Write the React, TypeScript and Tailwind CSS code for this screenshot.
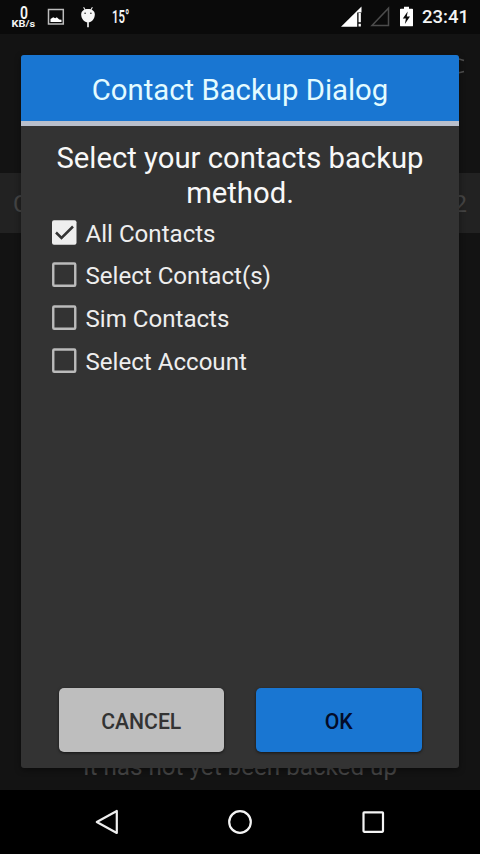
import { useState } from "react";

const methods = ["All Contacts", "Select Contact(s)", "Sim Contacts", "Select Account"];

function StatusBar() {
  return (
    <header className="flex h-[34px] shrink-0 items-start justify-between bg-[#0a0a0a] text-[#f4f4f4]">
      <div className="flex items-start pl-[11px]">
        <div className="flex w-[25px] flex-col items-center pt-[3px]">
          <span className="h-[16px] scale-x-[.8] text-[17.500px] leading-[20px] font-semibold">0</span>
          <span className="scale-x-[1.150] text-[9.500px] leading-[10px] font-bold whitespace-nowrap">KB/s</span>
        </div>
        <svg className="mt-[8px] ml-[11px]" width="18" height="18" viewBox="0 0 18 18">
          <rect x="1.500" y="1.500" width="14.800" height="14.500" fill="none" stroke="#bdbdbd" strokeWidth="1.500" />
          <path d="M3.500 14v-3l2.700-1.700 2 .9 1.600-.9 2.400 2.200 2.300.3V14z" fill="#fff" />
        </svg>
        <svg className="mt-[6px] ml-[15px]" width="16" height="22" viewBox="0 0 16 22">
          <path d="M3.600 1.200 5.200 4M12.400 1.200 10.800 4" stroke="#eee" strokeWidth="1.100" />
          <path d="M1.200 8.500C1.200 5 4 3.100 8 3.100s6.800 1.900 6.800 5.400c0 4.300-2.900 7.800-6.800 7.800S1.200 12.800 1.200 8.500z" fill="#f7f7f7" />
          <path d="M8 16v5.200" stroke="#eee" strokeWidth="1.700" />
          <circle cx="5.100" cy="7.200" r=".8" fill="#222" />
          <circle cx="10.900" cy="7.200" r=".8" fill="#222" />
        </svg>
        <span className="mt-[7.500px] ml-[16px] origin-left scale-x-[.65] text-[17.500px] leading-[19px] font-semibold">15°</span>
      </div>
      <div className="flex items-start pr-[12px]">
        <svg className="mt-[6px]" width="22" height="22" viewBox="0 0 22 22">
          <path d="M0 20.800 20.500.5v20.300z" fill="#fff" />
          <path d="M16.200 6.500h5V21h-5z" fill="#0a0a0a" />
          <path d="M18.700 7v9.200M18.700 17.800v2.800" stroke="#fff" strokeWidth="2.300" />
        </svg>
        <svg className="mt-[6px] ml-[7px]" width="21" height="22" viewBox="0 0 21 22">
          <path d="M2 19.500 18.500 2.200v17.300z" fill="none" stroke="#4c4c4c" strokeWidth="1.500" />
        </svg>
        <svg className="mt-[6px] ml-[8px]" width="15" height="22" viewBox="0 0 15 22">
          <path d="M5 .8h5v2h3.200q.8 0 .8.800v15.800q0 .9-.9.900H1.900q-.9 0-.9-.9V3.600q0-.8.8-.8H5z" fill="#fff" />
          <path d="M8.700 5.500 3.800 12.500h3.100L5.900 18 11 10.600H7.800z" fill="#0a0a0a" />
        </svg>
        <time className="mt-[6px] ml-[8px] w-[46px] text-[18.500px] leading-[23px] font-medium whitespace-nowrap">23:41</time>
      </div>
    </header>
  );
}

function PageBehind() {
  return (
    <div className="flex flex-1 flex-col bg-[#131313] text-[#444]">
      <div className="flex h-[139px] justify-end pt-[23.500px] pr-[14px]">
        <svg width="24" height="16" viewBox="0 0 24 16">
          <path d="M0 1h17l5 1.500M0 14.800h17l5-1.300" fill="none" stroke="#505050" strokeWidth="1.600" />
        </svg>
      </div>
      <div className="flex h-[60px] items-center justify-between bg-[#222] px-[13px] pt-[2px] text-[24px]">
        <span>Contacts</span>
        <span>2</span>
      </div>
      <div className="mt-auto pb-[9px] text-center text-[24.200px] leading-[28px]">It has not yet been backed up</div>
    </div>
  );
}

function NavigationBar() {
  return (
    <nav className="flex h-[64px] shrink-0 items-center justify-center gap-[107px] bg-black">
      <svg width="26" height="26" viewBox="0 0 26 26">
        <path d="M2.800 13 22.800 2v22z" fill="none" stroke="#eee" strokeWidth="2.200" strokeLinejoin="round" />
      </svg>
      <svg width="26" height="26" viewBox="0 0 26 26">
        <circle cx="13" cy="13" r="10.800" fill="none" stroke="#f4f4f4" strokeWidth="2.200" />
      </svg>
      <svg width="26" height="26" viewBox="0 0 26 26">
        <rect x="3.500" y="3.300" width="19.500" height="19.500" rx=".7" fill="none" stroke="#f4f4f4" strokeWidth="2.200" />
      </svg>
    </nav>
  );
}

export default function App() {
  const [checked, setChecked] = useState([true, false, false, false]);

  return (
    <div className="relative flex h-[854px] w-[480px] flex-col overflow-hidden font-['Roboto',sans-serif]">
      <StatusBar />
      <PageBehind />
      <NavigationBar />
      <section
        role="dialog"
        className="absolute top-[55px] left-[21px] flex h-[713px] w-[438px] flex-col overflow-hidden rounded-[3px] bg-[#333] shadow-[0_2px_6px_rgba(0,0,0,0.4)]"
      >
        <h1 className="flex h-[71px] shrink-0 items-center justify-center border-b-[5px] border-[#b9bfcb] bg-[#1976d2] pt-[5px] text-[29.300px] text-[#e3fbff]">
          Contact Backup Dialog
        </h1>
        <p className="mt-[15px] text-center text-[29.250px] leading-[35px] text-[#f8f8f8]">
          Select your contacts backup
          <br />
          method.
        </p>
        <div className="mt-[1px] flex flex-col pl-[31px]">
          {methods.map((label, i) => (
            <button
              key={label}
              role="checkbox"
              aria-checked={checked[i]}
              className="flex h-[42.700px] items-start text-left"
              onClick={() => setChecked(checked.map((v, n) => (n === i ? !v : v)))}
            >
              <svg className="mt-[7.500px] shrink-0" width="25" height="26" viewBox="0 0 25 26">
                {checked[i] ? (
                  <>
                    <rect x="0" y=".3" width="24.500" height="24.500" rx="2" fill="#eee" />
                    <path d="m4 12.500 5.500 5.500L21 6.500" fill="none" stroke="#333" strokeWidth="2.500" />
                  </>
                ) : (
                  <rect x="1.250" y="1.500" width="22" height="22.200" rx="1" fill="none" stroke="#bbb" strokeWidth="2.400" />
                )}
              </svg>
              <span className="mt-[7.500px] ml-[8.500px] text-[24.100px] leading-[28px] text-[#eee]">{label}</span>
            </button>
          ))}
        </div>
        <div className="mt-auto mb-[16px] flex h-[64px] gap-[32px] px-[37.500px] text-[21.200px] font-medium">
          <button className="flex-1 rounded-[5px] bg-[#bebebe] pt-[3px] text-[#333] shadow-[0_1px_3px_rgba(0,0,0,0.6)]">CANCEL</button>
          <button className="flex-1 rounded-[5px] bg-[#1976d2] pt-[3px] text-[#030b28] shadow-[0_1px_3px_rgba(0,0,0,0.6)]">OK</button>
        </div>
      </section>
    </div>
  );
}
